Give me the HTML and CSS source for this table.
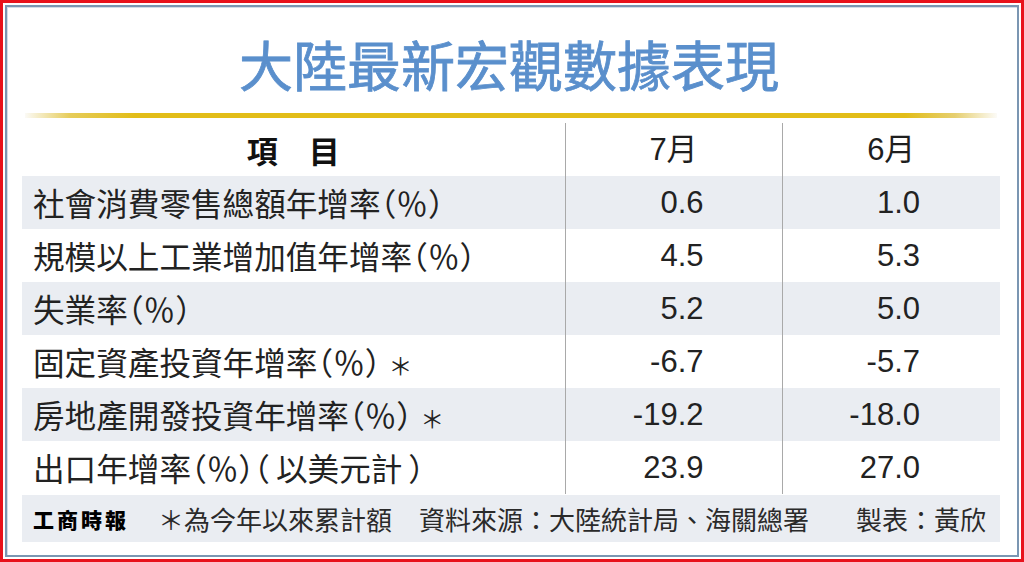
FILE: index.html
```html
<!DOCTYPE html>
<html lang="zh-Hant">
<head>
<meta charset="utf-8">
<title>大陸最新宏觀數據表現</title>
<link rel="stylesheet" href="styles.css">
</head>
<body>
<div class="frame">
  <div class="inner">
    <h1 class="title">大陸最新宏觀數據表現</h1>
    <div class="goldline"></div>
    <table class="data">
      <thead>
        <tr>
          <th class="item">項　目</th>
          <th class="month">7月</th>
          <th class="month">6月</th>
        </tr>
      </thead>
      <tbody>
        <tr class="shade">
          <td class="label">社會消費零售總額年增率<span class="pct">（％）</span></td>
          <td class="num c2">0.6</td>
          <td class="num c3">1.0</td>
        </tr>
        <tr>
          <td class="label">規模以上工業增加值年增率<span class="pct">（％）</span></td>
          <td class="num c2">4.5</td>
          <td class="num c3">5.3</td>
        </tr>
        <tr class="shade">
          <td class="label">失業率<span class="pct">（％）</span></td>
          <td class="num c2">5.2</td>
          <td class="num c3">5.0</td>
        </tr>
        <tr>
          <td class="label">固定資產投資年增率<span class="pct">（％）</span><span class="star">＊</span></td>
          <td class="num c2">-6.7</td>
          <td class="num c3">-5.7</td>
        </tr>
        <tr class="shade">
          <td class="label">房地產開發投資年增率<span class="pct">（％）</span><span class="star">＊</span></td>
          <td class="num c2">-19.2</td>
          <td class="num c3">-18.0</td>
        </tr>
        <tr>
          <td class="label">出口年增率<span class="pct">（％）（</span><span class="usd">以美元計</span><span class="pct">）</span></td>
          <td class="num c2">23.9</td>
          <td class="num c3">27.0</td>
        </tr>
      </tbody>
    </table>
    <div class="footer">
      <span class="logo">工商時報</span>
      <span class="note">＊為今年以來累計額</span>
      <span class="source">資料來源：大陸統計局、海關總署</span>
      <span class="credit">製表：黃欣</span>
    </div>
  </div>
</div>
</body>
</html>
```

FILE: styles.css
```css
* {
  box-sizing: border-box;
}

html, body {
  margin: 0;
  padding: 0;
  background: #ffffff;
}

body {
  width: 1024px;
  height: 562px;
  overflow: hidden;
  font-family: "Noto Sans CJK TC", "Noto Sans CJK SC", sans-serif;
  color: #1e1e1e;
}

.frame {
  width: 1024px;
  height: 562px;
  border: 3px solid #e8121c;
  padding: 2px;
  background: #ffffff;
}

.inner {
  height: 100%;
  border: 2px solid #7b96b2;
  box-shadow: inset 1px 1px 0 #d3dde8;
  display: flex;
  flex-direction: column;
}

.title {
  margin: 21px 0 0 0;
  height: 72px;
  line-height: 72px;
  text-align: center;
  font-size: 54px;
  font-weight: 400;
  color: #5a8fcc;
  -webkit-text-stroke: 0.8px #5a8fcc;
  padding-right: 6px;
}

.goldline {
  margin: 13px 0 0 18px;
  width: 972px;
  height: 5px;
  background: linear-gradient(to right,
    rgba(235, 230, 210, 0.2) 0px,
    #e6cc5a 45px,
    #e2bd18 110px,
    #e2bd18 880px,
    #e6cf70 930px,
    rgba(240, 235, 215, 0.2) 972px);
}

.data {
  margin: 5px 0 0 15px;
  width: 978px;
  border-collapse: collapse;
  table-layout: fixed;
}

.data tr {
  height: 53px;
}

.data th,
.data td {
  padding: 0;
  vertical-align: middle;
  line-height: 1.2;
}

.data th.item {
  width: 543px;
  text-align: center;
  font-size: 31px;
  font-weight: 700;
  color: #111111;
}

.data th.month {
  width: 217px;
  text-align: center;
  font-family: "Liberation Sans", "Noto Sans CJK TC", sans-serif;
  font-size: 31px;
  font-weight: 400;
  color: #1e1e1e;
  border-left: 1px solid #a9a9a9;
}

.data th.month:last-child {
  width: 218px;
}

.data tr.shade {
  background: #eaedf2;
}

.label {
  padding-left: 11px !important;
  font-size: 31.6px;
  font-weight: 400;
  white-space: nowrap;
  color: #222222;
}

.pct {
  font-feature-settings: "halt" 1;
}

.star {
  font-size: 24px;
  margin-left: 8px;
}

.usd {
  margin: 0 6px;
}

.num {
  font-family: "Liberation Sans", sans-serif;
  font-size: 31px;
  text-align: right;
  border-left: 1px solid #a9a9a9;
  color: #222222;
}

.num.c2 {
  padding-right: 78px !important;
}

.num.c3 {
  padding-right: 80px !important;
}

.footer {
  margin: 1px 0 0 15px;
  width: 978px;
  height: 47px;
  background: #eaedf2;
  display: flex;
  align-items: center;
  padding: 0 14px 0 11px;
  font-size: 26px;
  font-weight: 400;
  color: #2a2a2a;
  white-space: nowrap;
}

.logo {
  font-size: 21px;
  font-weight: 900;
  letter-spacing: 3px;
  color: #000000;
}

.note {
  margin-left: 29px;
}

.source {
  margin-left: 27px;
}

.credit {
  margin-left: auto;
}
```
